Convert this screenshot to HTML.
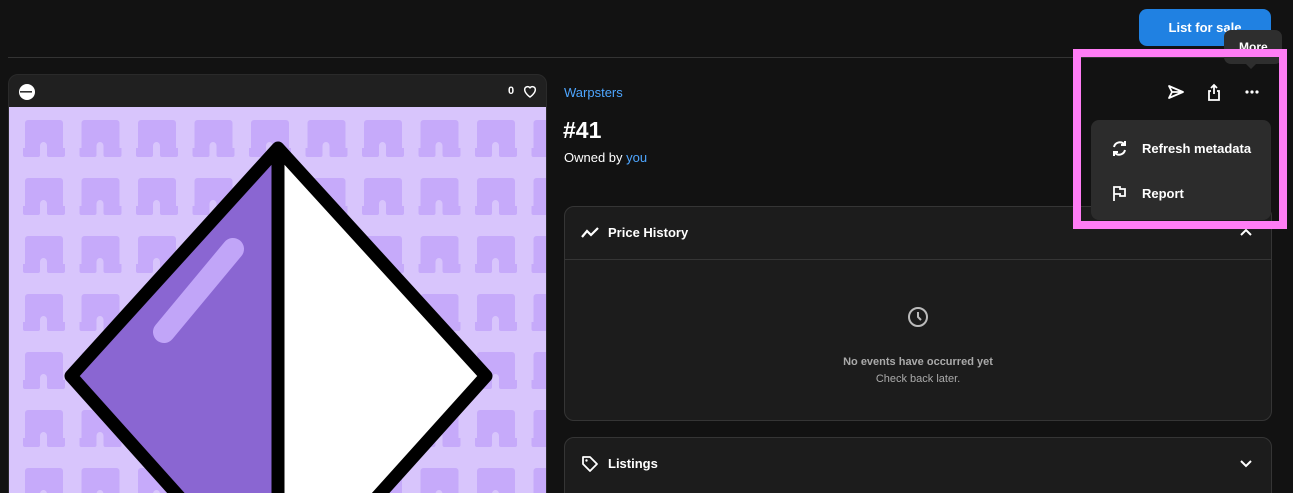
<!DOCTYPE html>
<html style="width:1293px;height:493px;overflow:hidden"><head><meta charset="utf-8"><style>
*{box-sizing:border-box;margin:0;padding:0}
body{width:1293px;height:493px;overflow:hidden;background:#121212;font-family:"Liberation Sans",sans-serif;color:#fff;position:relative}
.abs{position:absolute}
.btn{left:1139px;top:9px;width:132px;height:37px;border-radius:8px;background:#2081e2;font-weight:bold;font-size:13px;display:flex;align-items:center;justify-content:center}
.line{left:8px;top:57px;width:1277px;height:1px;background:#333}
.card{left:8px;top:74px;width:539px;height:430px;border-radius:10px;overflow:hidden;border:1px solid #2a2a2a;background:#202020}
.box{border:1px solid #353535;border-radius:10px;background:#1c1c1c}
.menu{left:1091px;top:120px;width:180px;height:100px;background:#2c2c2c;border-radius:8px}
.pink{left:1073px;top:49px;width:214px;height:180px;border:8px solid #ff7df5}
</style></head><body>
<div class="abs btn">List for sale</div>
<div class="abs line"></div>

<div class="abs card">
  <svg class="abs" style="left:9px;top:8px" width="18" height="18" viewBox="0 0 18 18"><circle cx="9" cy="9" r="8" fill="#fff"/><rect x="2" y="8" width="12" height="1.6" fill="#333"/></svg>
  <div class="abs" style="left:499px;top:10px;font-size:11px;font-weight:bold">0</div>
  <svg class="abs" style="left:513px;top:8px" width="16" height="16" viewBox="0 0 24 24"><path d="M12 21s-8-5.5-8-11a4.5 4.5 0 0 1 8-2.8A4.5 4.5 0 0 1 20 10c0 5.5-8 11-8 11z" fill="none" stroke="#fff" stroke-width="2.2"/></svg>
  <svg class="abs" style="left:0;top:32px" width="539" height="400" viewBox="0 0 539 400">
    <defs><pattern id="p" x="14" y="13" width="56.5" height="58" patternUnits="userSpaceOnUse">
      <path d="M5 0h32a3 3 0 0 1 3 3v25h2v7a2 2 0 0 1-2 2H26a2 2 0 0 1-2-2v-9a3.5 4 0 0 0-7 0v9a2 2 0 0 1-2 2H2a2 2 0 0 1-2-2v-7h2V3a3 3 0 0 1 3-3z" fill="#c6aafa"/>
    </pattern></defs>
    <rect width="539" height="400" fill="#d8c5fc"/>
    <rect width="539" height="400" fill="url(#p)"/>
    <path d="M269 41L62 269L269 500Z" fill="#8a66d2"/>
    <path d="M269 41L477 269L269 500Z" fill="#fff"/>
    <path d="M269 41L62 269L269 500L477 269Z M269 41V500" fill="none" stroke="#000" stroke-width="13" stroke-linejoin="round"/>
    <path d="M224 142L155 225" stroke="#c1a5f8" stroke-width="22" stroke-linecap="round"/>
  </svg>
</div>

<div class="abs" style="left:564px;top:85px;font-size:13px;color:#4ea6ff">Warpsters</div>
<div class="abs" style="left:563px;top:117px;font-size:23px;font-weight:bold">#41</div>
<div class="abs" style="left:564px;top:150px;font-size:13px">Owned by <span style="color:#4ea6ff">you</span></div>

<div class="abs box" style="left:564px;top:206px;width:708px;height:215px">
  <div class="abs" style="left:0;top:52px;width:706px;height:1px;background:#353535"></div>
  <svg class="abs" style="left:16px;top:18px" width="19" height="16" viewBox="0 0 19 16"><path d="M1 12l5-6 4 4 7-7" fill="none" stroke="#fff" stroke-width="2.2"/></svg>
  <div class="abs" style="left:43px;top:18px;font-size:13px;font-weight:bold">Price History</div>
  <svg class="abs" style="left:674px;top:20px" width="14" height="10" viewBox="0 0 14 10"><path d="M2 8l5-5 5 5" fill="none" stroke="#fff" stroke-width="2"/></svg>
  <svg class="abs" style="left:342px;top:99px" width="22" height="22" viewBox="0 0 22 22"><circle cx="11" cy="11" r="9" fill="none" stroke="#bbb" stroke-width="2"/><path d="M11 6v5l3 3" fill="none" stroke="#bbb" stroke-width="2"/></svg>
  <div class="abs" style="left:0;width:706px;top:149px;text-align:center;font-size:11px;font-weight:bold;color:#aaa">No events have occurred yet</div>
  <div class="abs" style="left:0;width:706px;top:166px;text-align:center;font-size:11px;color:#aaa">Check back later.</div>
</div>

<div class="abs box" style="left:564px;top:437px;width:708px;height:80px">
  <svg class="abs" style="left:16px;top:17px" width="18" height="18" viewBox="0 0 18 18"><path d="M2 2h7l7 7-7 7-7-7z" fill="none" stroke="#fff" stroke-width="1.8" stroke-linejoin="round"/><circle cx="5.5" cy="5.5" r="1.2" fill="#fff"/></svg>
  <div class="abs" style="left:43px;top:18px;font-size:13px;font-weight:bold">Listings</div>
  <svg class="abs" style="left:674px;top:21px" width="14" height="10" viewBox="0 0 14 10"><path d="M2 2l5 5 5-5" fill="none" stroke="#fff" stroke-width="2"/></svg>
</div>

<div class="abs" style="left:1224px;top:30px;width:58px;height:34px;background:#2e2e2e;border-radius:7px;font-size:12px;font-weight:bold;padding:10px 0 0 15px">More</div>
<div class="abs" style="left:1245px;top:63px;width:0;height:0;border-left:6px solid transparent;border-right:6px solid transparent;border-top:6px solid #2e2e2e"></div>

<svg class="abs" style="left:1167px;top:84px" width="18" height="16" viewBox="0 0 18 16"><path d="M2 2l14 6-14 6 3-6z M5 8h11" fill="none" stroke="#fff" stroke-width="1.8" stroke-linejoin="round"/></svg>
<svg class="abs" style="left:1207px;top:83px" width="14" height="18" viewBox="0 0 14 18"><path d="M7 11V2M4 5l3-3 3 3M4 8H2v9h10V8h-2" fill="none" stroke="#fff" stroke-width="1.8"/></svg>
<svg class="abs" style="left:1245px;top:90px" width="14" height="4" viewBox="0 0 14 4"><circle cx="2" cy="2" r="1.6" fill="#fff"/><circle cx="7" cy="2" r="1.6" fill="#fff"/><circle cx="12" cy="2" r="1.6" fill="#fff"/></svg>

<div class="abs menu">
  <svg class="abs" style="left:20px;top:20px" width="17" height="17" viewBox="0 0 17 17"><path d="M3 7a6 6 0 0 1 10-3M14 10a6 6 0 0 1-10 3" fill="none" stroke="#fff" stroke-width="2"/><path d="M14 1v4h-4M3 16v-4h4" fill="none" stroke="#fff" stroke-width="2"/></svg>
  <div class="abs" style="left:51px;top:21px;font-size:13px;font-weight:bold">Refresh metadata</div>
  <svg class="abs" style="left:21px;top:65px" width="15" height="17" viewBox="0 0 15 17"><path d="M2 16V2h6v2h5v7H8V9H2" fill="none" stroke="#fff" stroke-width="1.8"/></svg>
  <div class="abs" style="left:51px;top:66px;font-size:13px;font-weight:bold">Report</div>
</div>

<div class="abs pink"></div>
</body></html>
